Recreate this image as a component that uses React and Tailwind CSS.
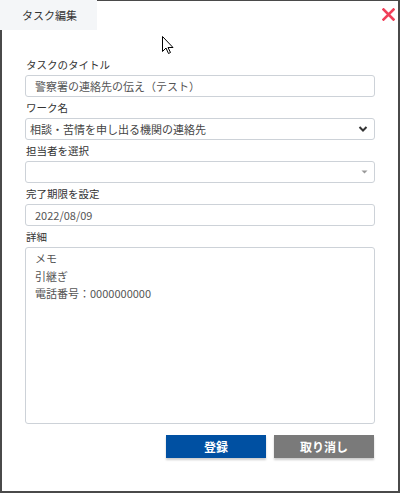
import React from 'react';

const jp = { fontFamily: '"Noto Sans CJK JP", "Noto Sans", sans-serif' };

const Label = ({ children }) => (
  <div className="text-[10.5px] leading-[21px] text-[#333] pl-px">{children}</div>
);

const App = () => {
  return (
    <div className="w-[400px] h-[493px] bg-white relative" style={jp}>
      <div className="w-full h-full border-t border-l-2 border-r-2 border-b-2 border-[#4a4a4a] flex flex-col">
        <div className="flex items-start justify-between">
          <div className="-mt-px -ml-[2px] w-[97px] h-[30px] bg-[#f4f6f8] flex items-center pl-[22px] text-[11px] text-[#333]">
            タスク編集
          </div>
          <button className="mt-[6px] mr-[3px] w-[14px] h-[14px] flex items-center justify-center">
            <svg width="13" height="13" viewBox="0 0 13 13">
              <path d="M1.5 1.5 L11.5 11.5 M11.5 1.5 L1.5 11.5" stroke="#f0405a" strokeWidth="2.6" strokeLinecap="square" />
            </svg>
          </button>
        </div>

        <div className="flex flex-col px-[23px] pt-[24px]">
          <Label>タスクのタイトル</Label>
          <input
            readOnly
            value="警察署の連絡先の伝え（テスト）"
            className="h-[22px] w-full border border-[#cdd2d8] rounded-[3px] px-[9px] text-[11px] text-[#555] outline-none"
          />

          <Label>ワーク名</Label>
          <div className="h-[22px] w-full border border-[#cdd2d8] rounded-[3px] pl-[4px] pr-[6px] flex items-center justify-between text-[11px] text-[#444]">
            <span>相談・苦情を申し出る機関の連絡先</span>
            <svg width="10" height="8" viewBox="0 0 10 8">
              <path d="M1.5 2 L5 5.5 L8.5 2" fill="none" stroke="#333" strokeWidth="2" />
            </svg>
          </div>

          <Label>担当者を選択</Label>
          <div className="h-[22px] w-full border border-[#cdd2d8] rounded-[3px] pr-[6px] flex items-center justify-end">
            <svg width="7" height="4" viewBox="0 0 7 4">
              <path d="M0.5 0.5 L6.5 0.5 L3.5 3.5 Z" fill="#999" />
            </svg>
          </div>

          <Label>完了期限を設定</Label>
          <input
            readOnly
            value="2022/08/09"
            className="h-[22px] w-full border border-[#cdd2d8] rounded-[3px] px-[9px] text-[11px] text-[#555] outline-none"
          />

          <Label>詳細</Label>
          <textarea
            readOnly
            value={'メモ\n引継ぎ\n電話番号：0000000000'}
            className="h-[177px] w-full border border-[#cdd2d8] rounded-[3px] px-[9px] pt-[2px] text-[11px] leading-[17.5px] text-[#555] resize-none outline-none"
          />

          <div className="flex justify-end gap-[8px] mt-[11px] pr-px">
            <button className="w-[100px] h-[23px] bg-[#0050a2] text-white text-[12px] font-bold shadow-[0_2px_2px_rgba(0,0,0,0.2)]">
              登録
            </button>
            <button className="w-[100px] h-[23px] bg-[#7a7a7a] text-white text-[12px] font-bold shadow-[0_2px_2px_rgba(0,0,0,0.2)]">
              取り消し
            </button>
          </div>
        </div>
      </div>

      <svg className="absolute left-[162px] top-[36px]" width="13" height="19" viewBox="0 0 13 19">
        <path d="M0.5 0.5 L0.5 15.5 L4 12 L6.5 17.5 L8.5 16.5 L6 11.5 L11 11.5 Z" fill="#fff" stroke="#000" strokeWidth="1" strokeLinejoin="miter" />
      </svg>
    </div>
  );
};

export default App;
